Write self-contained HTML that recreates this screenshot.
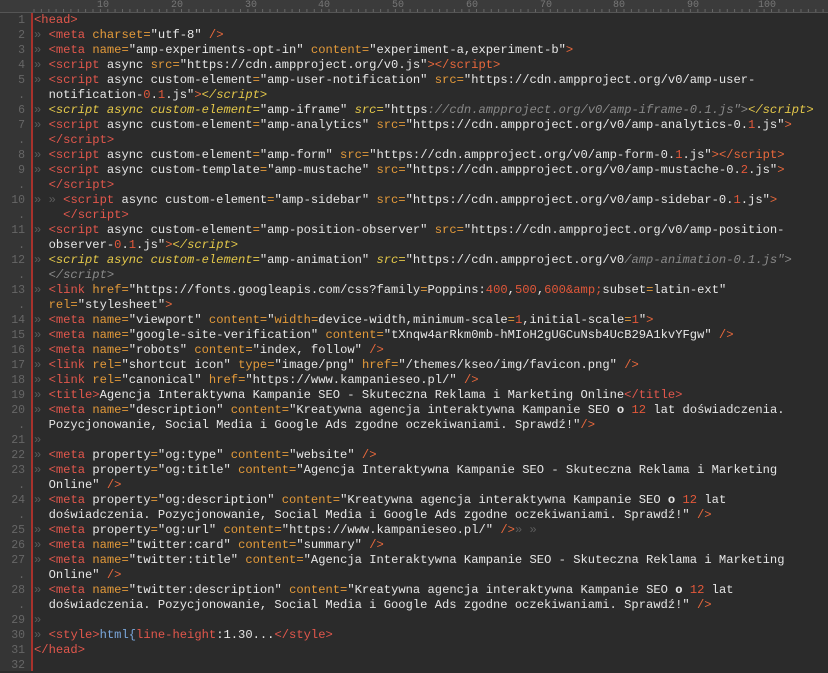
<!DOCTYPE html>
<html><head><meta charset="utf-8"><style>
html,body{margin:0;padding:0;background:#2b2b2b;width:828px;height:671px;overflow:hidden}
#g{position:absolute;left:0;top:0;width:31px;height:671px;background:#353535}
#bar{position:absolute;left:31px;top:13px;width:2px;height:658px;background:#a8322c}
#r{position:absolute;left:0;top:0;width:828px;height:12px;background:#3b3b3b;border-bottom:1px solid #555;font:10px "Liberation Mono",monospace;color:#777}
#r span{position:absolute;top:0}
#code{position:absolute;left:0;top:13px;font:12.15px/15px "Liberation Mono","DejaVu Sans Mono",monospace;color:#e6e6e6}
.row{height:15px;white-space:pre;position:relative}
.n{position:absolute;left:0;width:25px;text-align:right;color:#666;font-size:11.5px}
.x{position:absolute;left:34px}
.t{color:#e2574c}.a{color:#e39a3a}.p{color:#e8683c}.d{color:#e2583a}.q{color:#5c5c5c}
.y{color:#e4c84a;font-style:italic}.gi{color:#8a8a8a;font-style:italic}.b{color:#7aa6da}
</style></head><body>
<div id="g"></div><div id="bar"></div>
<div id="r"><span style="left:97px">10</span><span style="left:171px">20</span><span style="left:245px">30</span><span style="left:318px">40</span><span style="left:392px">50</span><span style="left:466px">60</span><span style="left:540px">70</span><span style="left:613px">80</span><span style="left:687px">90</span><span style="left:758px">100</span>
<svg width="828" height="12" style="position:absolute;left:0;top:0"><g stroke="#666" stroke-width="1">
<path d="M34 12v-3M41.4 12v-3M48.8 12v-3M56.1 12v-3M63.5 12v-3M70.9 12v-3M78.3 12v-3M85.6 12v-3M93 12v-3M100.4 12v-3M107.8 12v-3M115.1 12v-3M122.5 12v-3M129.9 12v-3M137.3 12v-3M144.6 12v-3M152 12v-3M159.4 12v-3M166.8 12v-3M174.1 12v-3M181.5 12v-3M188.9 12v-3M196.3 12v-3M203.6 12v-3M211 12v-3M218.4 12v-3M225.8 12v-3M233.1 12v-3M240.5 12v-3M247.9 12v-3M255.3 12v-3M262.6 12v-3M270 12v-3M277.4 12v-3M284.8 12v-3M292.1 12v-3M299.5 12v-3M306.9 12v-3M314.3 12v-3M321.6 12v-3M329 12v-3M336.4 12v-3M343.8 12v-3M351.1 12v-3M358.5 12v-3M365.9 12v-3M373.3 12v-3M380.6 12v-3M388 12v-3M395.4 12v-3M402.8 12v-3M410.1 12v-3M417.5 12v-3M424.9 12v-3M432.3 12v-3M439.6 12v-3M447 12v-3M454.4 12v-3M461.8 12v-3M469.1 12v-3M476.5 12v-3M483.9 12v-3M491.3 12v-3M498.6 12v-3M506 12v-3M513.4 12v-3M520.8 12v-3M528.1 12v-3M535.5 12v-3M542.9 12v-3M550.3 12v-3M557.6 12v-3M565 12v-3M572.4 12v-3M579.8 12v-3M587.1 12v-3M594.5 12v-3M601.9 12v-3M609.3 12v-3M616.6 12v-3M624 12v-3M631.4 12v-3M638.8 12v-3M646.1 12v-3M653.5 12v-3M660.9 12v-3M668.3 12v-3M675.6 12v-3M683 12v-3M690.4 12v-3M697.8 12v-3M705.1 12v-3M712.5 12v-3M719.9 12v-3M727.3 12v-3M734.6 12v-3M742 12v-3M749.4 12v-3M756.8 12v-3M764.1 12v-3M771.5 12v-3M778.9 12v-3M786.3 12v-3M793.6 12v-3M801 12v-3M808.4 12v-3M815.8 12v-3M823.1 12v-3"/></g></svg></div>
<div id="code">
<div class="row"><span class="n">1</span><span class="x"><span class="t">&lt;head&gt;</span></span></div>
<div class="row"><span class="n">2</span><span class="x"><span class="q">»</span> <span class="t">&lt;meta</span> <span class="a">charset=</span>"utf-8" <span class="p">/&gt;</span></span></div>
<div class="row"><span class="n">3</span><span class="x"><span class="q">»</span> <span class="t">&lt;meta</span> <span class="a">name=</span>"amp-experiments-opt-in" <span class="a">content=</span>"experiment-a,experiment-b"<span class="p">&gt;</span></span></div>
<div class="row"><span class="n">4</span><span class="x"><span class="q">»</span> <span class="t">&lt;script</span> async <span class="a">src=</span>"https://cdn.ampproject.org/v0.js"<span class="p">&gt;&lt;/script&gt;</span></span></div>
<div class="row"><span class="n">5</span><span class="x"><span class="q">»</span> <span class="t">&lt;script</span> async custom-element<span class="a">=</span>"amp-user-notification" <span class="a">src=</span>"https://cdn.ampproject.org/v0/amp-user-</span></div>
<div class="row"><span class="n">.</span><span class="x">  notification-<span class="d">0</span>.<span class="d">1</span>.js"<span class="p">&gt;</span><span class="y">&lt;/script&gt;</span></span></div>
<div class="row"><span class="n">6</span><span class="x"><span class="q">»</span> <span class="y">&lt;script async custom-element=</span>"amp-iframe" <span class="y">src=</span>"https<span class="gi">://cdn.ampproject.org/v0/amp-iframe-0.1.js</span><span class="gi">"&gt;</span><span class="y">&lt;/script&gt;</span></span></div>
<div class="row"><span class="n">7</span><span class="x"><span class="q">»</span> <span class="t">&lt;script</span> async custom-element<span class="a">=</span>"amp-analytics" <span class="a">src=</span>"https://cdn.ampproject.org/v0/amp-analytics-0.<span class="d">1</span>.js"<span class="p">&gt;</span></span></div>
<div class="row"><span class="n">.</span><span class="x">  <span class="t">&lt;/script&gt;</span></span></div>
<div class="row"><span class="n">8</span><span class="x"><span class="q">»</span> <span class="t">&lt;script</span> async custom-element<span class="a">=</span>"amp-form" <span class="a">src=</span>"https://cdn.ampproject.org/v0/amp-form-0.<span class="d">1</span>.js"<span class="p">&gt;&lt;/script&gt;</span></span></div>
<div class="row"><span class="n">9</span><span class="x"><span class="q">»</span> <span class="t">&lt;script</span> async custom-template<span class="a">=</span>"amp-mustache" <span class="a">src=</span>"https://cdn.ampproject.org/v0/amp-mustache-0.<span class="d">2</span>.js"<span class="p">&gt;</span></span></div>
<div class="row"><span class="n">.</span><span class="x">  <span class="t">&lt;/script&gt;</span></span></div>
<div class="row"><span class="n">10</span><span class="x"><span class="q">» »</span> <span class="t">&lt;script</span> async custom-element<span class="a">=</span>"amp-sidebar" <span class="a">src=</span>"https://cdn.ampproject.org/v0/amp-sidebar-0.<span class="d">1</span>.js"<span class="p">&gt;</span></span></div>
<div class="row"><span class="n">.</span><span class="x">    <span class="t">&lt;/script&gt;</span></span></div>
<div class="row"><span class="n">11</span><span class="x"><span class="q">»</span> <span class="t">&lt;script</span> async custom-element<span class="a">=</span>"amp-position-observer" <span class="a">src=</span>"https://cdn.ampproject.org/v0/amp-position-</span></div>
<div class="row"><span class="n">.</span><span class="x">  observer-<span class="d">0</span>.<span class="d">1</span>.js"<span class="p">&gt;</span><span class="y">&lt;/script&gt;</span></span></div>
<div class="row"><span class="n">12</span><span class="x"><span class="q">»</span> <span class="y">&lt;script async custom-element=</span>"amp-animation" <span class="y">src=</span>"https://cdn.ampproject.org/v0<span class="gi">/amp-animation-0.1.js"&gt;</span></span></div>
<div class="row"><span class="n">.</span><span class="x">  <span class="gi">&lt;/script&gt;</span></span></div>
<div class="row"><span class="n">13</span><span class="x"><span class="q">»</span> <span class="t">&lt;link</span> <span class="a">href=</span>"https://fonts.googleapis.com/css?family<span class="a">=</span>Poppins:<span class="d">400</span>,<span class="d">500</span>,<span class="d">600&amp;amp;</span>subset<span class="a">=</span>latin-ext"</span></div>
<div class="row"><span class="n">.</span><span class="x">  <span class="a">rel=</span>"stylesheet"<span class="p">&gt;</span></span></div>
<div class="row"><span class="n">14</span><span class="x"><span class="q">»</span> <span class="t">&lt;meta</span> <span class="a">name=</span>"viewport" <span class="a">content=</span>"<span class="a">width=</span>device-width,minimum-scale<span class="a">=</span><span class="d">1</span>,initial-scale<span class="a">=</span><span class="d">1</span>"<span class="p">&gt;</span></span></div>
<div class="row"><span class="n">15</span><span class="x"><span class="q">»</span> <span class="t">&lt;meta</span> <span class="a">name=</span>"google-site-verification" <span class="a">content=</span>"tXnqw4arRkm0mb-hMIoH2gUGCuNsb4UcB29A1kvYFgw" <span class="p">/&gt;</span></span></div>
<div class="row"><span class="n">16</span><span class="x"><span class="q">»</span> <span class="t">&lt;meta</span> <span class="a">name=</span>"robots" <span class="a">content=</span>"index, follow" <span class="p">/&gt;</span></span></div>
<div class="row"><span class="n">17</span><span class="x"><span class="q">»</span> <span class="t">&lt;link</span> <span class="a">rel=</span>"shortcut icon" <span class="a">type=</span>"image/png" <span class="a">href=</span>"/themes/kseo/img/favicon.png" <span class="p">/&gt;</span></span></div>
<div class="row"><span class="n">18</span><span class="x"><span class="q">»</span> <span class="t">&lt;link</span> <span class="a">rel=</span>"canonical" <span class="a">href=</span>"https://www.kampanieseo.pl/" <span class="p">/&gt;</span></span></div>
<div class="row"><span class="n">19</span><span class="x"><span class="q">»</span> <span class="t">&lt;title&gt;</span>Agencja Interaktywna Kampanie SEO - Skuteczna Reklama i Marketing Online<span class="t">&lt;/title&gt;</span></span></div>
<div class="row"><span class="n">20</span><span class="x"><span class="q">»</span> <span class="t">&lt;meta</span> <span class="a">name=</span>"description" <span class="a">content=</span>"Kreatywna agencja interaktywna Kampanie SEO <b>o</b> <span class="d">12</span> lat doświadczenia.</span></div>
<div class="row"><span class="n">.</span><span class="x">  Pozycjonowanie, Social Media i Google Ads zgodne oczekiwaniami. Sprawdź!"<span class="p">/&gt;</span></span></div>
<div class="row"><span class="n">21</span><span class="x"><span class="q">»</span></span></div>
<div class="row"><span class="n">22</span><span class="x"><span class="q">»</span> <span class="t">&lt;meta</span> property<span class="a">=</span>"og:type" <span class="a">content=</span>"website" <span class="p">/&gt;</span></span></div>
<div class="row"><span class="n">23</span><span class="x"><span class="q">»</span> <span class="t">&lt;meta</span> property<span class="a">=</span>"og:title" <span class="a">content=</span>"Agencja Interaktywna Kampanie SEO - Skuteczna Reklama i Marketing</span></div>
<div class="row"><span class="n">.</span><span class="x">  Online" <span class="p">/&gt;</span></span></div>
<div class="row"><span class="n">24</span><span class="x"><span class="q">»</span> <span class="t">&lt;meta</span> property<span class="a">=</span>"og:description" <span class="a">content=</span>"Kreatywna agencja interaktywna Kampanie SEO <b>o</b> <span class="d">12</span> lat</span></div>
<div class="row"><span class="n">.</span><span class="x">  doświadczenia. Pozycjonowanie, Social Media i Google Ads zgodne oczekiwaniami. Sprawdź!" <span class="p">/&gt;</span></span></div>
<div class="row"><span class="n">25</span><span class="x"><span class="q">»</span> <span class="t">&lt;meta</span> property<span class="a">=</span>"og:url" <span class="a">content=</span>"https://www.kampanieseo.pl/" <span class="p">/&gt;</span><span class="q">» »</span></span></div>
<div class="row"><span class="n">26</span><span class="x"><span class="q">»</span> <span class="t">&lt;meta</span> <span class="a">name=</span>"twitter:card" <span class="a">content=</span>"summary" <span class="p">/&gt;</span></span></div>
<div class="row"><span class="n">27</span><span class="x"><span class="q">»</span> <span class="t">&lt;meta</span> <span class="a">name=</span>"twitter:title" <span class="a">content=</span>"Agencja Interaktywna Kampanie SEO - Skuteczna Reklama i Marketing</span></div>
<div class="row"><span class="n">.</span><span class="x">  Online" <span class="p">/&gt;</span></span></div>
<div class="row"><span class="n">28</span><span class="x"><span class="q">»</span> <span class="t">&lt;meta</span> <span class="a">name=</span>"twitter:description" <span class="a">content=</span>"Kreatywna agencja interaktywna Kampanie SEO <b>o</b> <span class="d">12</span> lat</span></div>
<div class="row"><span class="n">.</span><span class="x">  doświadczenia. Pozycjonowanie, Social Media i Google Ads zgodne oczekiwaniami. Sprawdź!" <span class="p">/&gt;</span></span></div>
<div class="row"><span class="n">29</span><span class="x"><span class="q">»</span></span></div>
<div class="row"><span class="n">30</span><span class="x"><span class="q">»</span> <span class="t">&lt;style&gt;</span><span class="b">html{</span><span class="t">line-height</span>:1.30...<span class="t">&lt;/style&gt;</span></span></div>
<div class="row"><span class="n">31</span><span class="x"><span class="t">&lt;/head&gt;</span></span></div>
<div class="row"><span class="n">32</span><span class="x"></span></div>
</div>
</body></html>
